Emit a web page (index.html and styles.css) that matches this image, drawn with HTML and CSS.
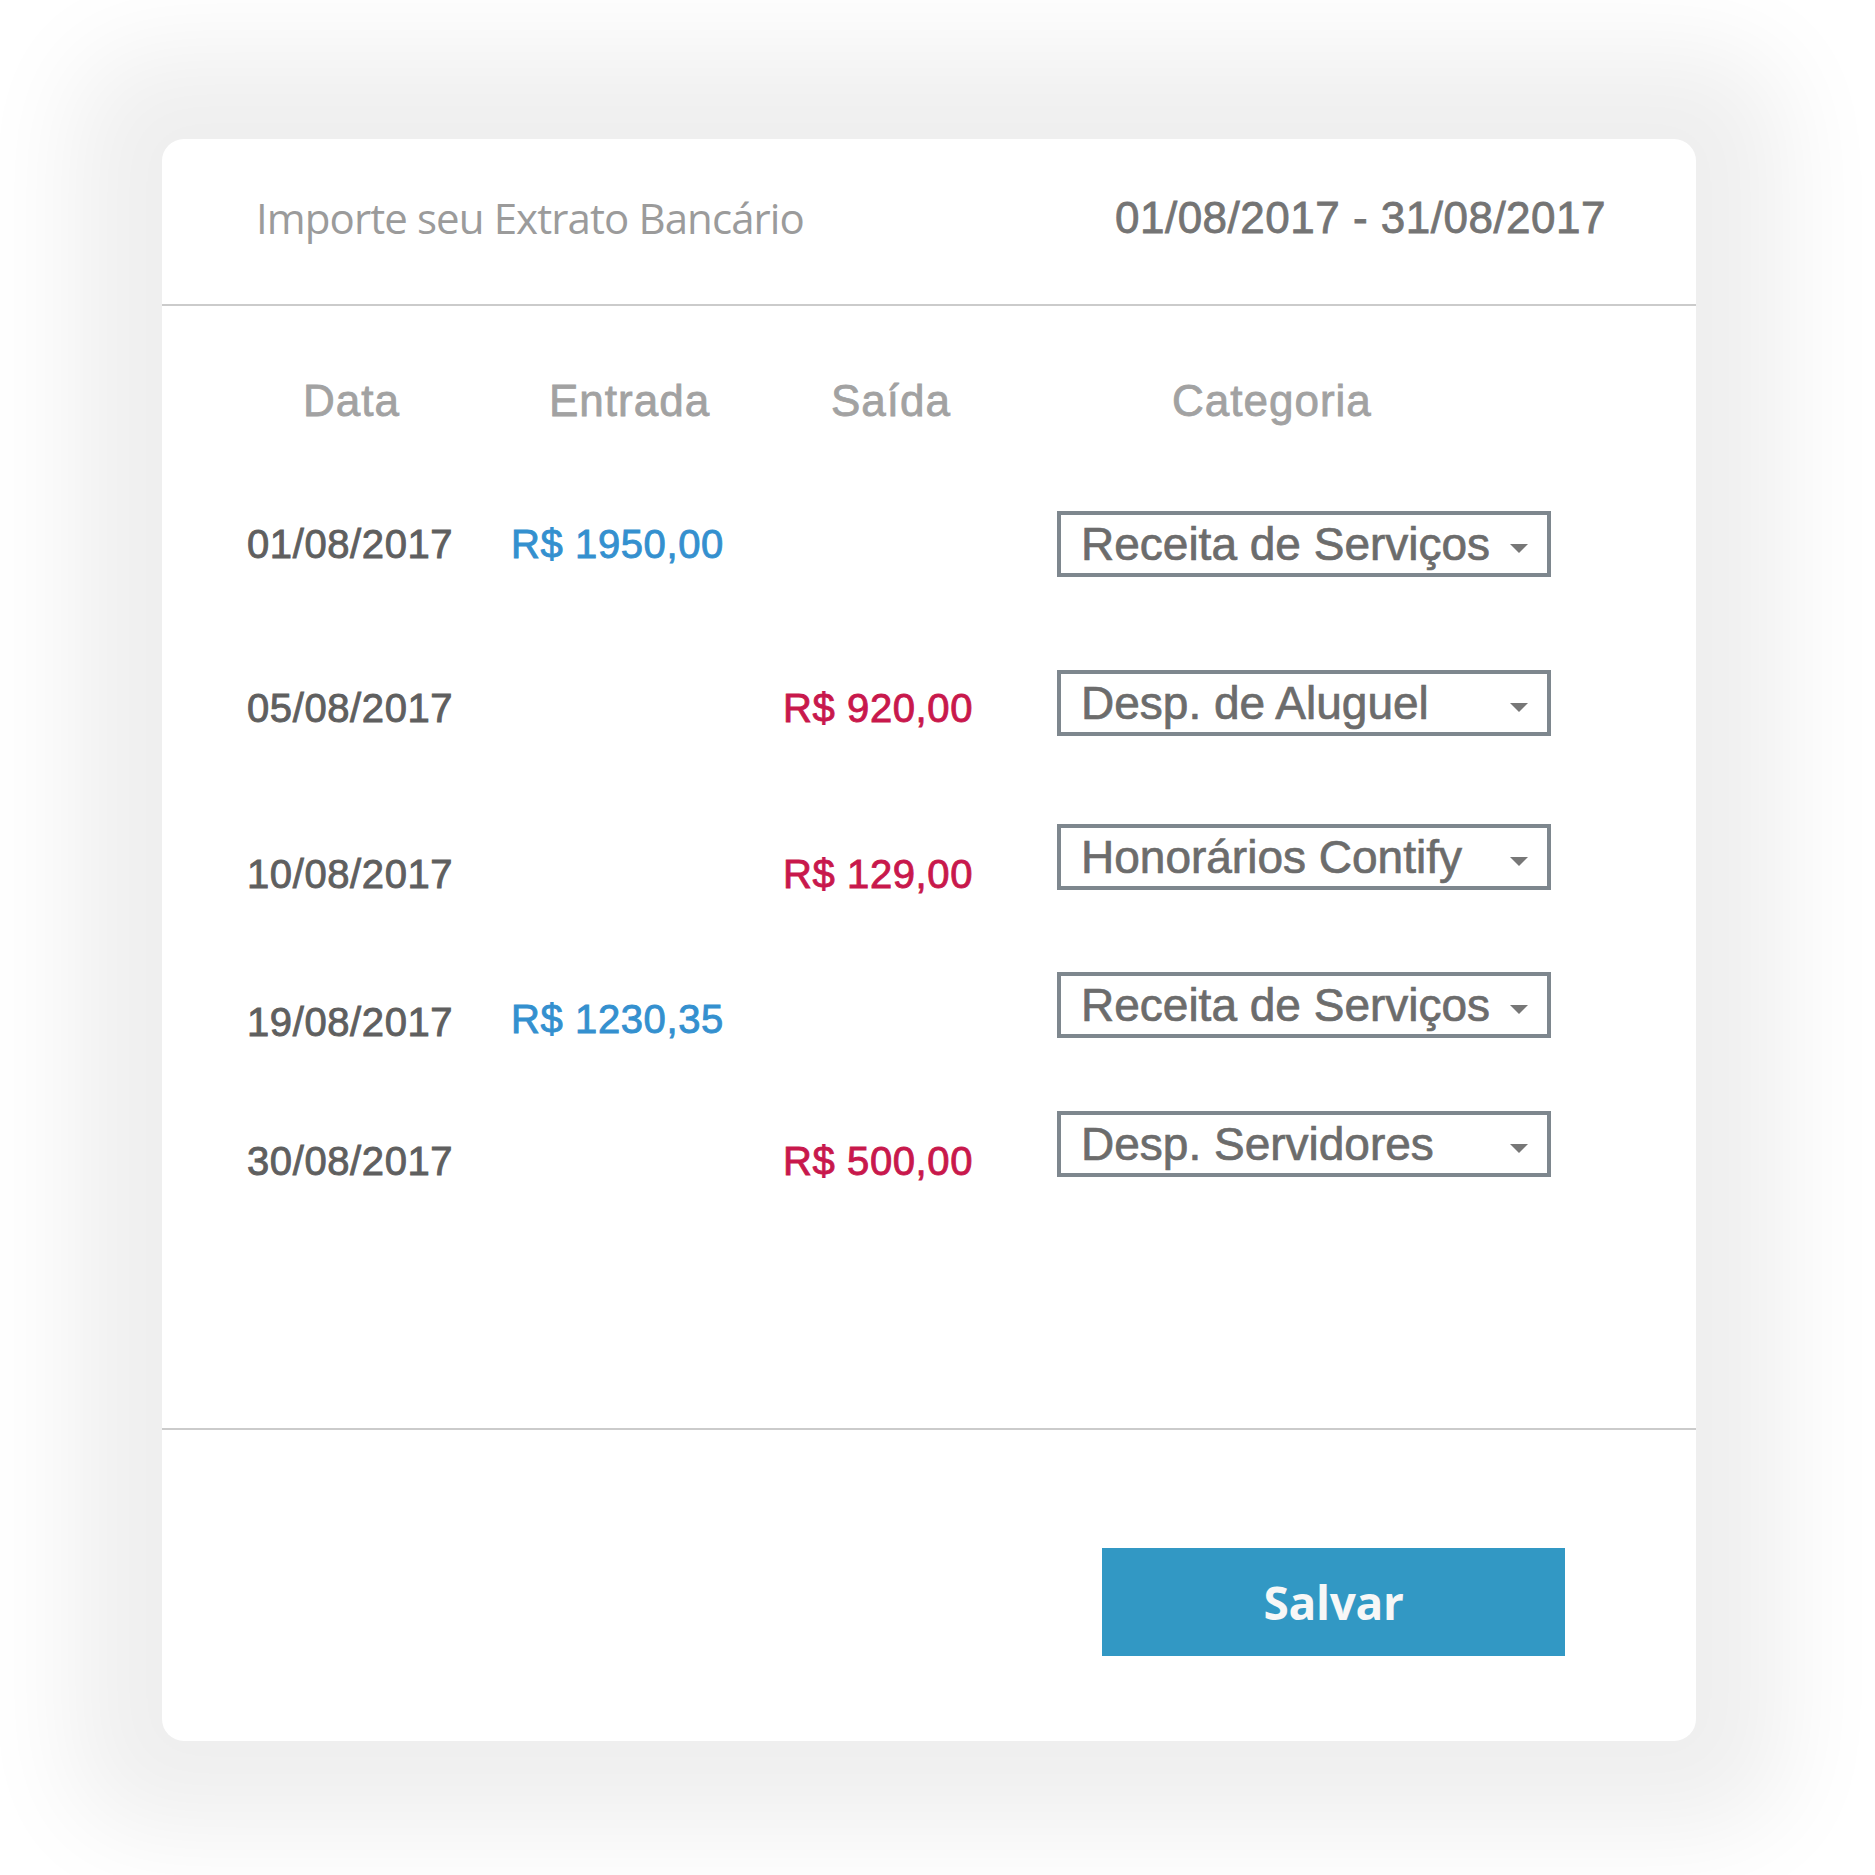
FILE: index.html
```html
<!DOCTYPE html>
<html lang="pt-BR">
<head>
<meta charset="utf-8">
<title>Importe seu Extrato Bancário</title>
<link rel="stylesheet" href="styles.css">
</head>
<body>
<div class="stage">
  <div class="card">
    <header class="card-header">
      <h1 class="title">Importe seu Extrato Bancário</h1>
      <div class="period">01/08/2017 - 31/08/2017</div>
    </header>

    <section class="card-body">
      <div class="grid head">
        <div class="th th-data">Data</div>
        <div class="th th-in">Entrada</div>
        <div class="th th-out">Saída</div>
        <div class="th th-cat">Categoria</div>
      </div>

      <div class="rows">
        <div class="grid row">
          <div class="cell date">01/08/2017</div>
          <div class="cell in">R$ 1950,00</div>
          <div class="cell out"></div>
          <div class="select"><span>Receita de Serviços</span><svg class="caret" width="18" height="9" viewBox="0 0 18 9"><polygon points="0,0 18,0 9,9"/></svg></div>
        </div>
        <div class="grid row">
          <div class="cell date">05/08/2017</div>
          <div class="cell in"></div>
          <div class="cell out">R$ 920,00</div>
          <div class="select"><span>Desp. de Aluguel</span><svg class="caret" width="18" height="9" viewBox="0 0 18 9"><polygon points="0,0 18,0 9,9"/></svg></div>
        </div>
        <div class="grid row">
          <div class="cell date">10/08/2017</div>
          <div class="cell in"></div>
          <div class="cell out">R$ 129,00</div>
          <div class="select"><span>Honorários Contify</span><svg class="caret" width="18" height="9" viewBox="0 0 18 9"><polygon points="0,0 18,0 9,9"/></svg></div>
        </div>
        <div class="grid row">
          <div class="cell date">19/08/2017</div>
          <div class="cell in in-up">R$ 1230,35</div>
          <div class="cell out"></div>
          <div class="select"><span>Receita de Serviços</span><svg class="caret" width="18" height="9" viewBox="0 0 18 9"><polygon points="0,0 18,0 9,9"/></svg></div>
        </div>
        <div class="grid row">
          <div class="cell date">30/08/2017</div>
          <div class="cell in"></div>
          <div class="cell out">R$ 500,00</div>
          <div class="select"><span>Desp. Servidores</span><svg class="caret" width="18" height="9" viewBox="0 0 18 9"><polygon points="0,0 18,0 9,9"/></svg></div>
        </div>
      </div>
    </section>

    <footer class="card-footer">
      <button class="save" type="button">Salvar</button>
    </footer>
  </div>
</div>
</body>
</html>
```

FILE: styles.css
```css
* { box-sizing: border-box; }

html, body {
  margin: 0;
  padding: 0;
  background: #ffffff;
}

body {
  font-family: "Liberation Sans", Arial, sans-serif;
}

.stage {
  padding: 139px 0 134px 162px;
  min-height: 1875px;
}

.card {
  width: 1534px;
  height: 1602px;
  background: #ffffff;
  border-radius: 22px;
  box-shadow: 0 0 100px 90px #efefef;
  display: flex;
  flex-direction: column;
  overflow: hidden;
}

/* Header */
.card-header {
  height: 167px;
  flex: none;
  display: flex;
  align-items: center;
  justify-content: space-between;
  padding: 0 90px 8px 94px;
  border-bottom: 2px solid #cbcbcb;
}

.title {
  margin: 0;
  font-family: "Open Sans", "Liberation Sans", sans-serif;
  font-weight: 400;
  font-size: 42px;
  letter-spacing: -0.9px;
  color: #9b9b9b;
}

.period {
  font-size: 44px;
  letter-spacing: 0.5px;
  color: #747474;
  -webkit-text-stroke: 0.8px #747474;
}

/* Body */
.card-body {
  height: 1122px;
  flex: none;
  padding: 69px 0 0 85px;
}

.grid {
  display: grid;
  grid-template-columns: 262px 274px 274px 494px;
  align-items: center;
}

.head {
  height: 52px;
}

.th {
  font-size: 44px;
  line-height: 52px;
  letter-spacing: 1px;
  color: #a2a2a2;
  -webkit-text-stroke: 0.8px #a2a2a2;
}

.th-data { padding-left: 56px; }
.th-in { padding-left: 40px; }
.th-out { padding-left: 48px; }
.th-cat { padding-left: 115px; }

.rows {
  display: flex;
  flex-direction: column;
}

.row {
  height: 66px;
  grid-template-rows: 66px;
}

.row:nth-child(1) { margin-top: 84px; }
.row:nth-child(2) { margin-top: 93px; }
.row:nth-child(3) { margin-top: 88px; }
.row:nth-child(4) { margin-top: 82px; }
.row:nth-child(5) { margin-top: 73px; }

.cell {
  font-size: 40px;
  line-height: 48px;
  letter-spacing: 0.6px;
  white-space: nowrap;
}

.row:nth-child(2) .cell { padding-top: 10px; }
.row:nth-child(3) .cell,
.row:nth-child(4) .cell,
.row:nth-child(5) .cell { padding-top: 34px; }
.row:nth-child(4) .cell.in-up { padding-top: 28px; }

.date {
  color: #5f5f5f;
  -webkit-text-stroke: 0.9px #5f5f5f;
}

.in {
  color: #3490cf;
  -webkit-text-stroke: 0.9px #3490cf;
  padding-left: 2px;
}

.out {
  color: #c8184c;
  -webkit-text-stroke: 0.9px #c8184c;
}

.select {
  height: 66px;
  width: 494px;
  border: 4px solid #7e878e;
  display: flex;
  align-items: center;
  justify-content: space-between;
  padding: 0 19px 0 20px;
  font-size: 46px;
  color: #6c6c6c;
  -webkit-text-stroke: 0.7px #6c6c6c;
  white-space: nowrap;
}

.caret {
  flex: none;
  margin-top: 8px;
  fill: #777777;
}

/* Footer */
.card-footer {
  flex: 1;
  border-top: 2px solid #cbcbcb;
  display: flex;
  justify-content: flex-end;
  align-items: flex-start;
  padding: 118px 131px 0 0;
}

.save {
  width: 463px;
  height: 108px;
  border: none;
  background: #3298c4;
  color: #f7f7f7;
  font-family: "Open Sans", "Liberation Sans", sans-serif;
  font-weight: 700;
  font-size: 46px;
  letter-spacing: -0.3px;
  padding: 0;
  cursor: pointer;
}
```
